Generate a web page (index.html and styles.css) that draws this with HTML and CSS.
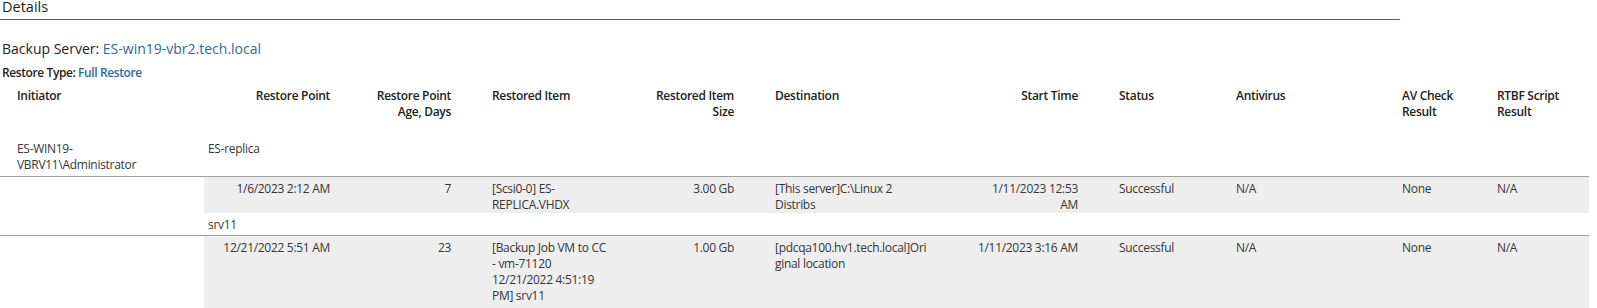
FILE: index.html
```html
<!DOCTYPE html>
<html>
<head>
<meta charset="utf-8">
<title>Details</title>
<link rel="stylesheet" href="styles.css">
</head>
<body>
<div class="page">
  <div class="section-title">Details</div>
  <div class="server">Backup Server: <span class="link">ES-win19-vbr2.tech.local</span></div>
  <div class="restore-type">Restore Type: <span class="link">Full Restore</span></div>
  <table class="report">
    <colgroup>
      <col class="c-init"><col class="c-rp"><col class="c-age"><col class="c-item"><col class="c-size"><col class="c-dest"><col class="c-start"><col class="c-status"><col class="c-av"><col class="c-avres"><col class="c-rtbf">
    </colgroup>
    <thead>
      <tr>
        <th class="first">Initiator</th>
        <th class="r">Restore Point</th>
        <th class="r">Restore Point<br>Age, Days</th>
        <th class="gap">Restored Item</th>
        <th class="r">Restored Item<br>Size</th>
        <th class="gap">Destination</th>
        <th class="r">Start Time</th>
        <th class="gap">Status</th>
        <th>Antivirus</th>
        <th>AV Check<br>Result</th>
        <th>RTBF Script<br>Result</th>
      </tr>
    </thead>
    <tbody>
      <tr class="group">
        <td class="first">ES-WIN19-<br>VBRV11\Administrator</td>
        <td colspan="10">ES-replica</td>
      </tr>
      <tr class="detail">
        <td class="blank"></td>
        <td class="r">1/6/2023 2:12 AM</td>
        <td class="r">7</td>
        <td class="gap">[Scsi0-0] ES-<br>REPLICA.VHDX</td>
        <td class="r">3.00 Gb</td>
        <td class="gap">[This server]C:\Linux 2<br>Distribs</td>
        <td class="r">1/11/2023 12:53<br>AM</td>
        <td class="gap">Successful</td>
        <td>N/A</td>
        <td>None</td>
        <td>N/A</td>
      </tr>
      <tr class="group sub">
        <td class="first"></td>
        <td colspan="10">srv11</td>
      </tr>
      <tr class="detail last">
        <td class="blank"></td>
        <td class="r">12/21/2022 5:51 AM</td>
        <td class="r">23</td>
        <td class="gap">[Backup Job VM to CC<br>- vm-71120<br>12/21/2022 4:51:19<br>PM] srv11</td>
        <td class="r">1.00 Gb</td>
        <td class="gap">[pdcqa100.hv1.tech.local]Ori<br>ginal location</td>
        <td class="r">1/11/2023 3:16 AM</td>
        <td class="gap">Successful</td>
        <td>N/A</td>
        <td>None</td>
        <td>N/A</td>
      </tr>
    </tbody>
  </table>
</div>
</body>
</html>
```
FILE: styles.css
```css
html, body {
  margin: 0;
  padding: 0;
  background: #ffffff;
}

.page {
  font-family: "Open Sans", "Noto Sans", sans-serif;
  color: #1e1e1e;
  width: 1597px;
}

.section-title {
  width: 1398px;
  padding-left: 2px;
  font-size: 14.5px;
  line-height: 14px;
  padding-bottom: 5px;
  border-bottom: 1px solid #3a6c92;
}

.server {
  margin-top: 19px;
  padding-left: 2px;
  font-size: 14px;
  line-height: 19px;
}

.restore-type {
  margin-top: 7px;
  padding-left: 2px;
  font-size: 12px;
  line-height: 16px;
  font-weight: 600;
  letter-spacing: -0.4px;
}

.link {
  color: #2d6a99;
}

.report {
  margin-top: 3px;
  width: 1589px;
  table-layout: fixed;
  border-collapse: collapse;
  font-size: 12px;
  line-height: 16px;
  letter-spacing: -0.3px;
}

.c-init { width: 204px; }
.c-rp { width: 130px; }
.c-age { width: 121px; }
.c-item { width: 175px; }
.c-size { width: 108px; }
.c-dest { width: 222px; }
.c-start { width: 122px; }
.c-status { width: 150px; }
.c-av { width: 166px; }
.c-avres { width: 95px; }
.c-rtbf { width: 96px; }

.report th,
.report td {
  text-align: left;
  vertical-align: top;
  white-space: nowrap;
  padding: 0 4px;
}

.report th {
  font-weight: 600;
  color: #222222;
  padding-top: 4px;
  padding-bottom: 18px;
}

.report td {
  color: #363636;
}

.report .r {
  text-align: right;
}

.report .gap {
  padding-left: 37px;
}

.report .first {
  padding-left: 17px;
}

.group td {
  padding-top: 3px;
  padding-bottom: 3px;
  border-bottom: 1px solid #a0a0a0;
}

.group.sub td {
  padding-top: 4px;
  padding-bottom: 2px;
}

.detail td {
  background: #eeeeee;
  padding-top: 4px;
  padding-bottom: 0;
}

.detail.last td {
  padding-bottom: 8px;
}

.detail td.blank {
  background: #ffffff;
}
```
